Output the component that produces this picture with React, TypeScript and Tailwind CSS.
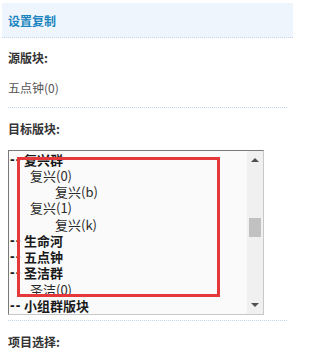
const font = "font-['Noto_Sans_CJK_SC','Noto_Sans',sans-serif]";

type Row = { text: string; level: 0 | 1 | 2 };

const rows: Row[] = [
  { text: "复兴群", level: 0 },
  { text: "复兴(0)", level: 1 },
  { text: "复兴(b)", level: 2 },
  { text: "复兴(1)", level: 1 },
  { text: "复兴(k)", level: 2 },
  { text: "生命河", level: 0 },
  { text: "五点钟", level: 0 },
  { text: "圣洁群", level: 0 },
  { text: "圣洁(0)", level: 1 },
  { text: "小组群版块", level: 0 },
  { text: "小组群(0)", level: 1 },
];

function OptionRow({ row }: { row: Row }) {
  if (row.level === 0) {
    return (
      <div className="flex h-[16.25px] items-center whitespace-nowrap pl-[1px] text-[13px] leading-[15px] font-bold text-[#1a1a1a]">
        <span className="w-[14px] font-['Liberation_Sans',sans-serif] text-[14px] tracking-[1px]">--</span>
        <span>{row.text}</span>
      </div>
    );
  }
  return (
    <div
      className={
        "flex h-[16.25px] items-center whitespace-nowrap text-[13px] leading-[15px] text-[#2a2a2a] " +
        (row.level === 1 ? "pl-[21px]" : "pl-[46px]")
      }
    >
      {row.text}
    </div>
  );
}

export default function App() {
  return (
    <div className={`relative h-[350px] w-[295px] overflow-hidden bg-white ${font}`}>
      {/* panel header */}
      <div className="mx-[2px] mt-[3px] flex h-[35px] items-center border-b border-dotted border-[#c6d6e6] bg-[#eef5fc] px-[6px] pt-[2px]">
        <span className="text-[12px] font-bold text-[#1b84c0]">设置复制</span>
      </div>

      {/* source board */}
      <div className="mx-[8px] border-b border-dotted border-[#c6d6e6] pb-[11px] pt-[12px]">
        <div className="text-[12px] font-bold leading-[16px] text-[#333]">源版块:</div>
        <div className="mt-[14px] text-[12px] leading-[16px] text-[#555]">五点钟(0)</div>
      </div>

      {/* target board */}
      <div className="mx-[8px] border-b border-dotted border-[#c6d6e6] pb-[5px] pt-[13px]">
        <div className="text-[12px] font-bold leading-[16px] text-[#333]">目标版块:</div>
        <div className="mt-[13px] flex h-[165px] w-[256px] overflow-hidden border border-[#7a7a7a] border-b-[#c8c8c8] border-r-[#c8c8c8] bg-[#fafafa]">
          <div className="flex-1 overflow-hidden">
            {rows.map((row, i) => (
              <OptionRow key={i} row={row} />
            ))}
          </div>
          <div className="flex w-[16px] flex-col items-center bg-[#f0f0f0]">
            <div className="mt-[7px] h-0 w-0 border-x-[4px] border-b-[4px] border-x-transparent border-b-[#505050]" />
            <div className="mt-[56px] h-[19px] w-[12px] bg-[#c1c1c1]" />
            <div className="mt-auto mb-[7px] h-0 w-0 border-x-[4px] border-t-[4px] border-x-transparent border-t-[#505050]" />
          </div>
        </div>
      </div>

      {/* item choice */}
      <div className="mx-[8px] pt-[13px]">
        <div className="text-[12px] font-bold leading-[16px] text-[#333]">项目选择:</div>
      </div>

      {/* red annotation frame */}
      <div className="absolute left-[17px] top-[157px] h-[140px] w-[203px] border-[3px] border-[#e5383b]" />
    </div>
  );
}
